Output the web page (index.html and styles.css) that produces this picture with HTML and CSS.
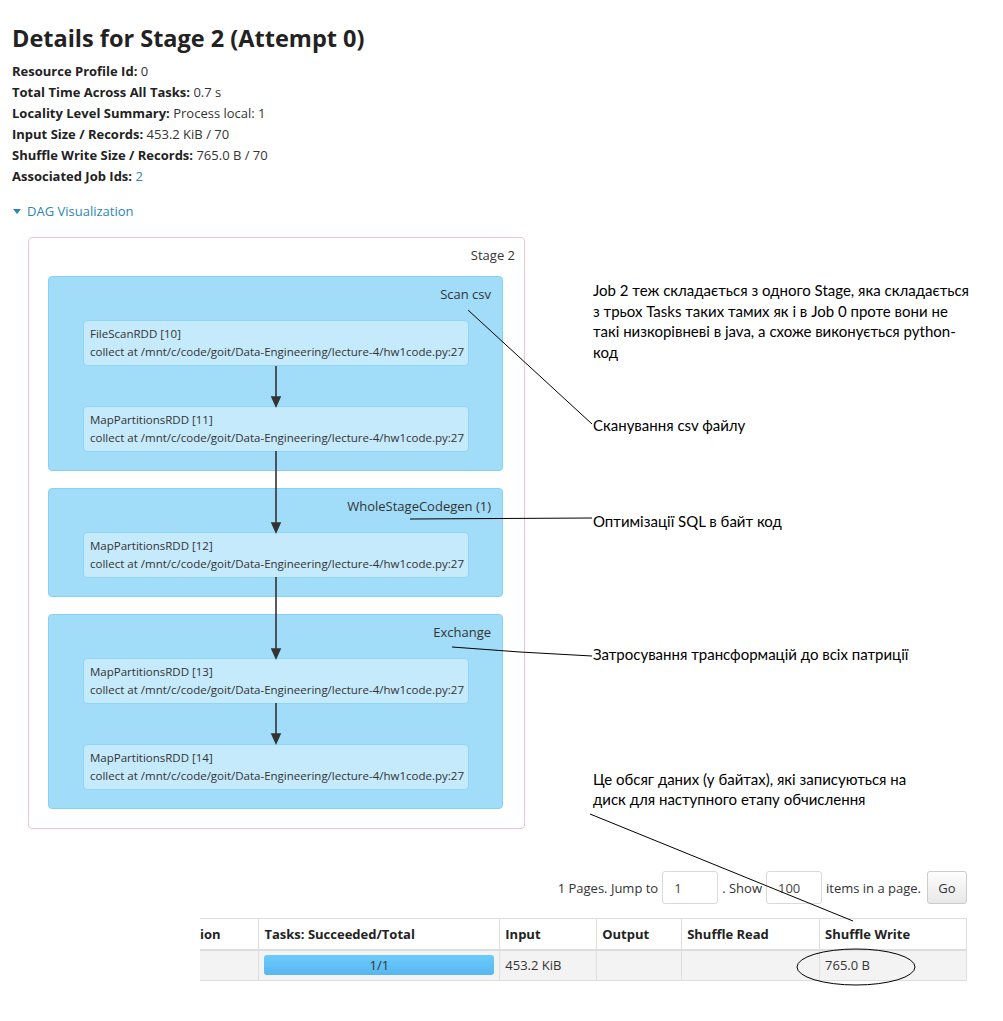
FILE: index.html
```html
<!DOCTYPE html>
<html lang="uk">
<head>
<meta charset="utf-8">
<title>Details for Stage 2 (Attempt 0)</title>
<link rel="stylesheet" href="styles.css">
</head>
<body>
<div class="page">
  <h3 class="title">Details for Stage 2 (Attempt 0)</h3>
  <ul class="summary">
    <li><strong>Resource Profile Id:</strong> 0</li>
    <li><strong>Total Time Across All Tasks:</strong> 0.7 s</li>
    <li><strong>Locality Level Summary:</strong> Process local: 1</li>
    <li><strong>Input Size / Records:</strong> 453.2 KiB / 70</li>
    <li><strong>Shuffle Write Size / Records:</strong> 765.0 B / 70</li>
    <li><strong>Associated Job Ids:</strong> <a class="link" href="#">2</a></li>
  </ul>
  <div class="dag-toggle"><span class="caret"></span><a class="link" href="#">DAG Visualization</a></div>

  <div class="dag-row">
    <div class="stage">
      <div class="stage-label">Stage 2</div>
      <div class="cluster">
        <div class="cluster-label">Scan csv</div>
        <div class="node"><div>FileScanRDD [10]</div><div>collect at /mnt/c/code/goit/Data-Engineering/lecture-4/hw1code.py:27</div></div>
        <div class="node"><div>MapPartitionsRDD [11]</div><div>collect at /mnt/c/code/goit/Data-Engineering/lecture-4/hw1code.py:27</div></div>
      </div>
      <div class="cluster">
        <div class="cluster-label">WholeStageCodegen (1)</div>
        <div class="node"><div>MapPartitionsRDD [12]</div><div>collect at /mnt/c/code/goit/Data-Engineering/lecture-4/hw1code.py:27</div></div>
      </div>
      <div class="cluster">
        <div class="cluster-label">Exchange</div>
        <div class="node"><div>MapPartitionsRDD [13]</div><div>collect at /mnt/c/code/goit/Data-Engineering/lecture-4/hw1code.py:27</div></div>
        <div class="node"><div>MapPartitionsRDD [14]</div><div>collect at /mnt/c/code/goit/Data-Engineering/lecture-4/hw1code.py:27</div></div>
      </div>
    </div>
    <div class="notes">
      <p class="note note-job">Job 2 теж складається з одного Stage, яка складається з трьох Tasks таких тамих як і в Job 0 проте вони не такі низкорівневі в java, а схоже виконується python-код</p>
      <p class="note note-scan">Сканування csv файлу</p>
      <p class="note note-sql">Оптимізації SQL в байт код</p>
      <p class="note note-exch">Затросування трансформацій до всіх патриції</p>
      <p class="note note-write">Це обсяг даних (у байтах), які записуються на диск для наступного етапу обчислення</p>
    </div>
  </div>

  <div class="pager">
    <span>1 Pages. Jump to</span>
    <input class="pager-input" type="text" value="1">
    <span>. Show</span>
    <input class="pager-input" type="text" value="100">
    <span>items in a page.</span>
    <button class="btn" type="button">Go</button>
  </div>

  <div class="table-row">
    <table class="tasks">
      <thead>
        <tr>
          <th class="c-desc">ion</th>
          <th class="c-tasks">Tasks: Succeeded/Total</th>
          <th class="c-input">Input</th>
          <th class="c-output">Output</th>
          <th class="c-sread">Shuffle Read</th>
          <th class="c-swrite">Shuffle Write</th>
        </tr>
      </thead>
      <tbody>
        <tr>
          <td class="c-desc"></td>
          <td class="c-tasks"><div class="progress">1/1</div></td>
          <td>453.2 KiB</td>
          <td></td>
          <td></td>
          <td>765.0 B</td>
        </tr>
      </tbody>
    </table>
  </div>
</div>

<svg class="overlay" width="1003" height="1021" viewBox="0 0 1003 1021" xmlns="http://www.w3.org/2000/svg">
  <g class="edges" stroke="#333" stroke-width="1.6" fill="#333">
    <line x1="276" y1="366" x2="276" y2="398"/>
    <polygon points="272,397 280,397 276,406"/>
    <line x1="276" y1="451" x2="276" y2="524"/>
    <polygon points="272,523 280,523 276,532"/>
    <line x1="276" y1="577" x2="276" y2="650"/>
    <polygon points="272,649 280,649 276,658"/>
    <line x1="276" y1="703" x2="276" y2="735"/>
    <polygon points="272,734 280,734 276,743"/>
  </g>
  <g class="marks" stroke="#000" stroke-width="1" fill="none">
    <line x1="468" y1="310" x2="592" y2="424"/>
    <line x1="410" y1="519" x2="592" y2="518"/>
    <polyline points="452,647 520,652 592,656"/>
    <line x1="590" y1="814" x2="853" y2="921"/>
    <ellipse cx="856" cy="967" rx="59" ry="18"/>
  </g>
</svg>
</body>
</html>
```

FILE: styles.css
```css
* { box-sizing: border-box; }

html, body {
  margin: 0;
  padding: 0;
  background: #fff;
}

body {
  font-family: "Open Sans", "Noto Sans", sans-serif;
  color: #333;
  font-size: 13px;
  position: relative;
  width: 1003px;
  min-height: 1021px;
  overflow: hidden;
}

.page {
  padding: 0 36px 0 12px;
}

.title {
  margin: 23px 0 8px;
  font-size: 23.5px;
  line-height: 30px;
  font-weight: 700;
  color: #222;
}

.summary {
  list-style: none;
  margin: 0;
  padding: 0;
}

.summary li {
  line-height: 21px;
  font-size: 13px;
}

.summary strong {
  font-weight: 700;
  color: #222;
}

.link {
  color: #2d86b3;
  text-decoration: none;
}

.dag-toggle {
  margin-top: 14px;
  line-height: 20px;
  font-size: 13px;
  display: flex;
  align-items: center;
}

.caret {
  width: 0;
  height: 0;
  border-left: 4.5px solid transparent;
  border-right: 4.5px solid transparent;
  border-top: 5px solid #2d86b3;
  margin: 0 6px 0 1px;
}

.dag-row {
  display: flex;
  align-items: flex-start;
  margin-top: 16px;
}

.stage {
  flex: 0 0 497px;
  margin-left: 16px;
  width: 497px;
  border: 1px solid #f4c3cd;
  border-radius: 4px;
  padding: 7px 21px 19px 19px;
  background: #fff;
}

.stage-label {
  text-align: right;
  font-size: 13px;
  line-height: 20px;
  margin-right: -12px;
  margin-bottom: 11px;
  color: #333;
}

.cluster {
  background: #a1dcf9;
  border: 1px solid #86d0f3;
  border-radius: 4px;
  padding: 7px 11px 18px 34px;
  display: flex;
  flex-direction: column;
  gap: 40px;
  margin-bottom: 17px;
}

.cluster:last-child {
  margin-bottom: 0;
}

.cluster-label {
  text-align: right;
  font-size: 13px;
  line-height: 20px;
  margin-bottom: -24px;
  color: #333;
}

.node {
  width: 386px;
  height: 46px;
  background: #c4eafc;
  border: 1px solid #8fd5f5;
  border-radius: 4px;
  padding: 4px 0 0 6px;
  font-size: 11.5px;
  line-height: 18px;
  color: #333;
  white-space: nowrap;
}

.notes {
  flex: 0 0 auto;
  margin-left: 68px;
  width: 376px;
  font-family: Lato, "Open Sans", sans-serif;
  color: #000;
  font-size: 15px;
  line-height: 20.5px;
}

.note {
  margin: 0;
}

.note-job { margin-top: 43px; }
.note-scan { margin-top: 53px; }
.note-sql { margin-top: 75px; }
.note-exch { margin-top: 113px; }
.note-write { margin-top: 104px; width: 335px; }

.pager {
  margin-top: 42px;
  display: flex;
  justify-content: flex-end;
  align-items: center;
  gap: 4px;
  font-size: 13px;
  color: #333;
  height: 33px;
}

.pager-input {
  width: 56px;
  height: 33px;
  border: 1px solid #d9d9d9;
  border-radius: 3px;
  padding: 0 11px;
  font-family: inherit;
  font-size: 13px;
  color: #444;
  background: #fff;
}

.btn {
  margin-left: 2px;
  width: 40px;
  height: 33px;
  border: 1px solid #ccc;
  border-radius: 3px;
  background: linear-gradient(#fdfdfd, #e8e8e8);
  font-family: inherit;
  font-size: 13px;
  color: #333;
  padding: 0;
}

.table-row {
  display: flex;
  justify-content: flex-end;
  margin-top: 14px;
}

.tasks {
  width: 767px;
  border-collapse: collapse;
  font-size: 13px;
  color: #333;
}

.tasks th,
.tasks td {
  border: 1px solid #ddd;
  padding: 0 5px;
  text-align: left;
  white-space: nowrap;
}

.tasks th {
  height: 31px;
  font-weight: 700;
  border-bottom: 2px solid #ddd;
  color: #222;
}

.tasks td {
  height: 31px;
  background: #f3f3f3;
}

.tasks .c-desc { width: 59px; padding-left: 0; border-left: none; }
.tasks .c-tasks { width: 241px; }
.tasks .c-input { width: 97px; }
.tasks .c-output { width: 85px; }
.tasks .c-sread { width: 138px; }
.tasks .c-swrite { width: 147px; }

.progress {
  height: 20px;
  border-radius: 3px;
  background: linear-gradient(#6dcbfb, #56b6ef);
  text-align: center;
  line-height: 20px;
  color: #333;
}

.overlay {
  position: absolute;
  left: 0;
  top: 0;
  pointer-events: none;
}
```
